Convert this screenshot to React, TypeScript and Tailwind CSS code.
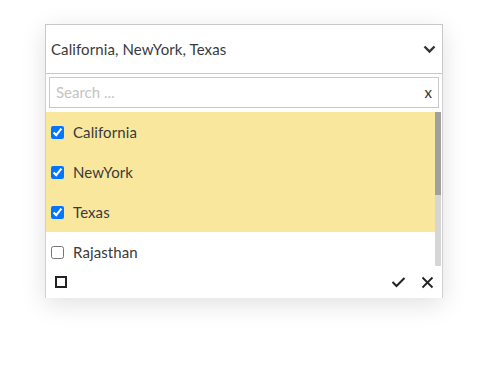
const items = [
  { label: 'California', checked: true },
  { label: 'NewYork', checked: true },
  { label: 'Texas', checked: true },
  { label: 'Rajasthan', checked: false },
];

export default function App() {
  return (
    <div className="w-[500px] h-[371px] bg-white pt-6 pl-[45px]" style={{ fontFamily: 'Lato, "Open Sans", sans-serif' }}>
      <div className="w-[398px] shadow-[0_6px_24px_rgba(0,0,0,0.12)]">
        {/* header */}
        <div className="h-[50px] border border-[#c8c8c8] flex items-center justify-between pl-[5px] pr-[5px]">
          <span className="text-[15px] tracking-[0.1px] text-[#3a3a3a]">California, NewYork, Texas</span>
          <svg width="13" height="9" viewBox="0 0 13 9" className="mr-[1px]">
            <path d="M1.5 1.5 L6.5 6.5 L11.5 1.5" fill="none" stroke="#333" strokeWidth="2.4" />
          </svg>
        </div>

        {/* panel */}
        <div className="border-x border-[#d0d0d0] relative">
          <div className="pt-[3px] px-[3px] pb-[4px]">
            <div className="h-[31px] border border-[#c8c8c8] flex items-center justify-between pl-[6px] pr-[6px]">
              <span className="text-[15px] text-[#c4c4c4]">Search ...</span>
              <span className="text-[15px] text-[#333]">x</span>
            </div>
          </div>

          <div className="flex h-[154px] overflow-hidden">
            <div className="flex-1">
              {items.map((it) => (
                <div
                  key={it.label}
                  className={`h-[40px] flex items-center pl-[5px] ${it.checked ? 'bg-[#fae79e]' : 'bg-white'}`}
                >
                  <input type="checkbox" checked={it.checked} readOnly className="w-[13px] h-[13px] m-0" />
                  <span className="ml-[9px] text-[15px] tracking-[0.1px] text-[#3a3a3a]">{it.label}</span>
                </div>
              ))}
            </div>
            <div className="w-[6px] mr-[1px] flex flex-col">
              <div className="h-[83px] bg-[#a0a0a0]" />
              <div className="h-[71px] bg-[#d6d6d6]" />
            </div>
          </div>

          <div className="h-[32px] bg-white flex items-center justify-between pl-[9px] pr-[8px]">
            <div className="w-[12px] h-[12px] border-2 border-[#222]" />
            <div className="flex items-center gap-[15px]">
              <svg width="15" height="12" viewBox="0 0 15 12">
                <path d="M1.5 6 L5.5 10 L13.5 2" fill="none" stroke="#222" strokeWidth="2" />
              </svg>
              <svg width="13" height="13" viewBox="0 0 13 13">
                <path d="M1.5 1.5 L11.5 11.5 M11.5 1.5 L1.5 11.5" fill="none" stroke="#222" strokeWidth="1.8" />
              </svg>
            </div>
          </div>
        </div>
      </div>
    </div>
  );
}
